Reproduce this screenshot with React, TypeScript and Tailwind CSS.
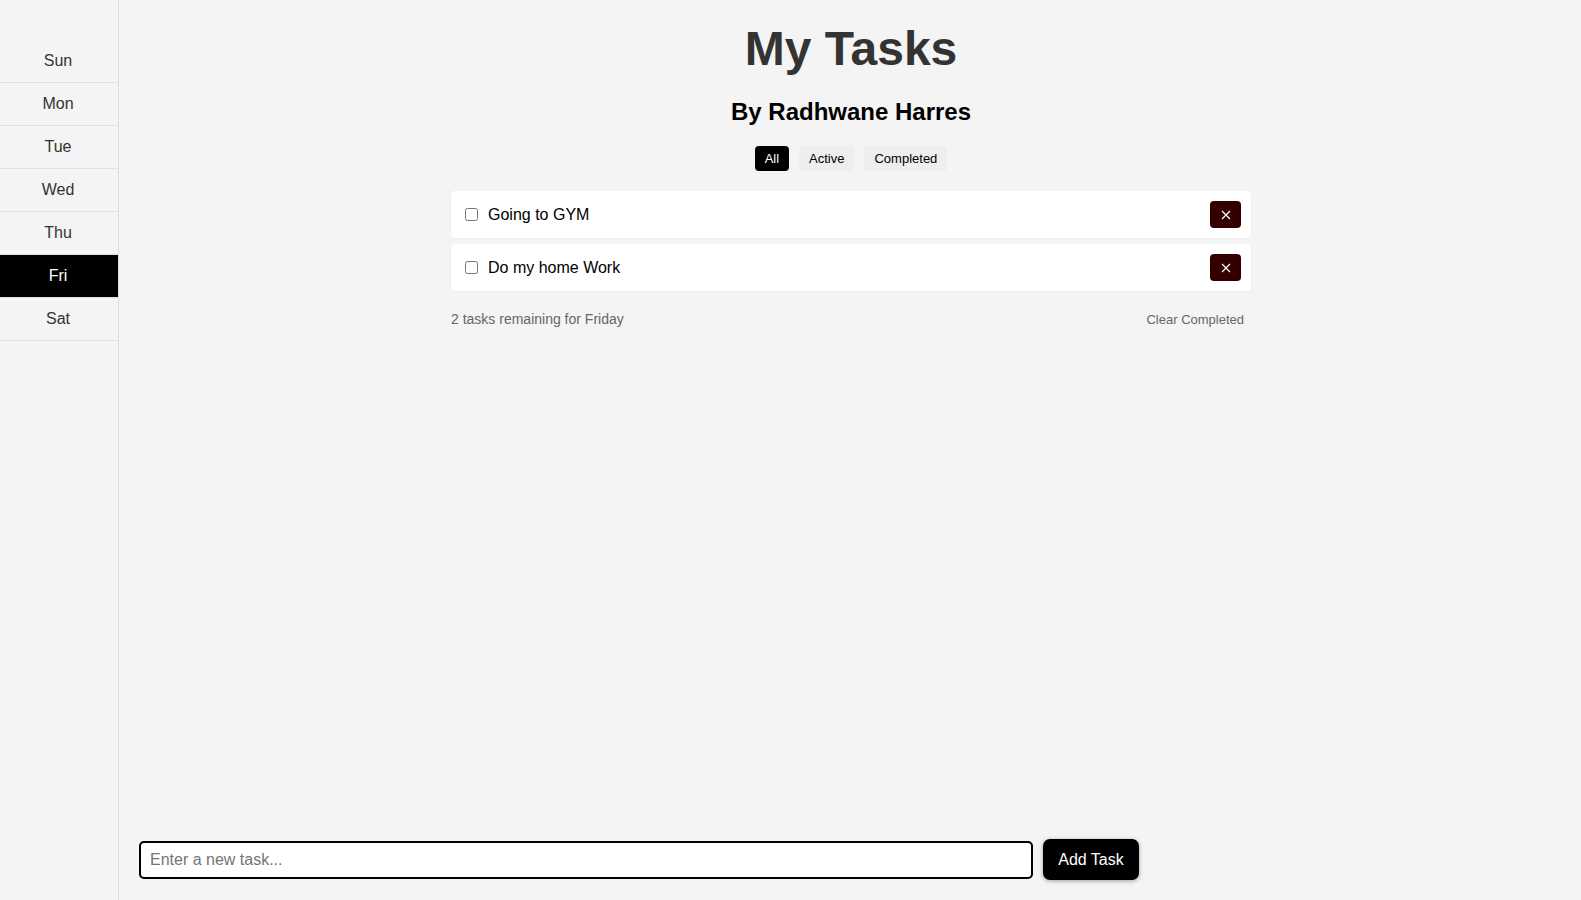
import { useState } from 'react';

interface Task {
  id: number;
  text: string;
  done: boolean;
}

const DAYS = ['Sun', 'Mon', 'Tue', 'Wed', 'Thu', 'Fri', 'Sat'];
const FULL_DAYS: Record<string, string> = {
  Sun: 'Sunday',
  Mon: 'Monday',
  Tue: 'Tuesday',
  Wed: 'Wednesday',
  Thu: 'Thursday',
  Fri: 'Friday',
  Sat: 'Saturday',
};

const FILTERS = ['All', 'Active', 'Completed'];

export default function App() {
  const [day, setDay] = useState('Fri');
  const [filter, setFilter] = useState('All');
  const [draft, setDraft] = useState('');
  const [tasks, setTasks] = useState<Task[]>([
    { id: 1, text: 'Going to GYM', done: false },
    { id: 2, text: 'Do my home Work', done: false },
  ]);

  const visible = tasks.filter((t) =>
    filter === 'Active' ? !t.done : filter === 'Completed' ? t.done : true
  );
  const remaining = tasks.filter((t) => !t.done).length;

  const addTask = () => {
    if (!draft.trim()) return;
    setTasks([...tasks, { id: Date.now(), text: draft.trim(), done: false }]);
    setDraft('');
  };

  return (
    <div className="flex h-screen bg-[#f4f4f4] font-['Liberation_Sans',Arial,sans-serif]">
      <aside className="w-[119px] shrink-0 border-r border-[#dddddd] pt-10">
        {DAYS.map((d) => (
          <button
            key={d}
            onClick={() => setDay(d)}
            className={`block h-[43px] w-full border-b border-[#e0e0e0] pr-[2px] text-center text-[16px] ${
              d === day ? 'bg-black text-white' : 'text-[#333333]'
            }`}
          >
            {d}
          </button>
        ))}
      </aside>

      <main className="flex min-w-0 flex-1 flex-col">
        <div className="flex flex-col items-center pl-[2px] pt-[21px]">
          <h1 className="text-[48px] font-bold leading-[55px] text-[#333333]">My Tasks</h1>
          <h2 className="mt-[22px] text-[24px] font-bold leading-[27px] text-black">
            By Radhwane Harres
          </h2>

          <div className="mt-[21px] flex gap-[10px]">
            {FILTERS.map((f) => (
              <button
                key={f}
                onClick={() => setFilter(f)}
                className={`h-[25px] rounded-[4px] px-[10px] text-[13px] ${
                  f === filter ? 'bg-black text-white' : 'bg-[#eeeeee] text-black'
                }`}
              >
                {f}
              </button>
            ))}
          </div>

          <div className="mt-[20px] flex w-[800px] flex-col gap-[6px]">
            {visible.map((task) => (
              <div
                key={task.id}
                className="flex h-[47px] items-center rounded-[4px] bg-white pl-[14px] pr-[10px] shadow-[0_1px_2px_rgba(0,0,0,0.04)]"
              >
                <input
                  type="checkbox"
                  checked={task.done}
                  onChange={() =>
                    setTasks(tasks.map((t) => (t.id === task.id ? { ...t, done: !t.done } : t)))
                  }
                  className="h-[13px] w-[13px]"
                />
                <span
                  className={`ml-[10px] flex-1 text-[16px] ${
                    task.done ? 'text-gray-400 line-through' : 'text-black'
                  }`}
                >
                  {task.text}
                </span>
                <button
                  onClick={() => setTasks(tasks.filter((t) => t.id !== task.id))}
                  className="flex h-[27px] w-[31px] items-center justify-center rounded-[4px] bg-[#330000] text-white"
                >
                  <svg width="10" height="10" viewBox="0 0 10 10" stroke="currentColor" strokeWidth="1.2">
                    <path d="M1 1 9 9M9 1 1 9" />
                  </svg>
                </button>
              </div>
            ))}
          </div>

          <div className="mt-[14px] flex w-[800px] items-center justify-between">
            <span className="text-[14px] text-[#666666]">
              {remaining} tasks remaining for {FULL_DAYS[day]}
            </span>
            <button
              onClick={() => setTasks(tasks.filter((t) => !t.done))}
              className="px-[7px] py-[5px] text-[13px] text-[#666666]"
            >
              Clear Completed
            </button>
          </div>
        </div>

        <div className="mt-auto pb-5 pl-5">
          <div className="flex w-[1000px] items-center gap-[10px]">
            <input
              autoFocus
              value={draft}
              onChange={(e) => setDraft(e.target.value)}
              onKeyDown={(e) => e.key === 'Enter' && addTask()}
              placeholder="Enter a new task..."
              className="h-[38px] flex-1 rounded-[5px] border-2 border-black bg-white px-[9px] text-[16px] text-black outline-none placeholder:text-[#757575]"
            />
            <button
              onClick={addTask}
              className="h-[41px] w-[96px] rounded-[7px] bg-black text-[16px] text-white shadow-[0_1px_4px_rgba(0,0,0,0.35)]"
            >
              Add Task
            </button>
          </div>
        </div>
      </main>
    </div>
  );
}
